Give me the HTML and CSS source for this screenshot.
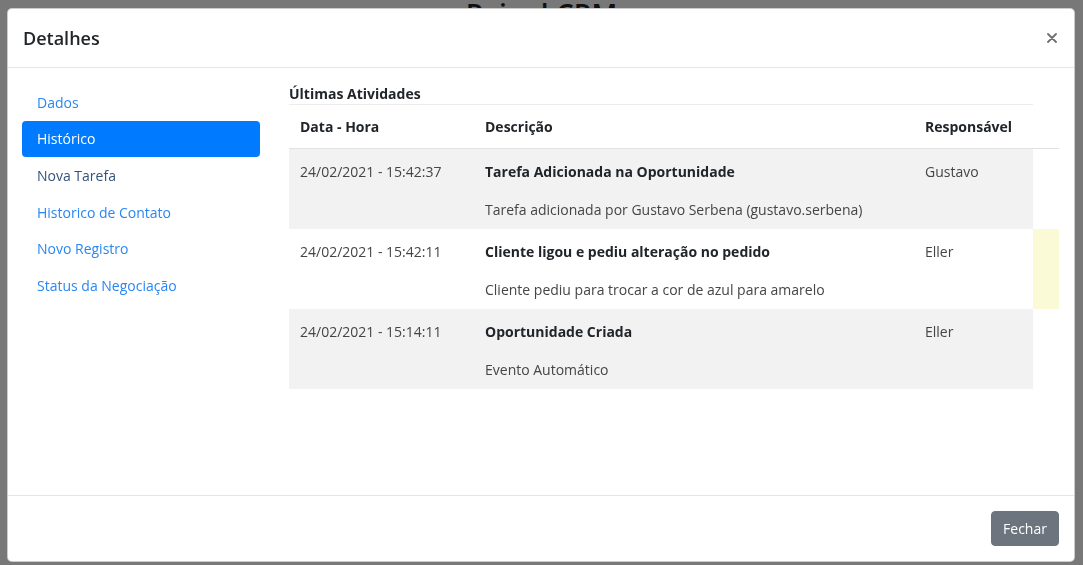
FILE: index.html
```html
<!DOCTYPE html>
<html lang="pt-BR">
<head>
    <meta charset="UTF-8">
    <meta name="viewport" content="width=device-width, initial-scale=1.0">
    <title>Painel CRM</title>
    <link rel="stylesheet" href="styles.css">
</head>
<body>
    <h1 class="page-title">Painel CRM</h1>

    <div class="backdrop"></div>

    <div class="modal">
        <div class="modal-header">
            <h5 class="modal-title">Detalhes</h5>
            <button class="close" type="button" aria-label="Fechar">
                <svg width="10" height="10" viewBox="0 0 10 10">
                    <path d="M1 1L9 9M9 1L1 9" stroke="#6f6f6f" stroke-width="1.8" stroke-linecap="round"/>
                </svg>
            </button>
        </div>

        <div class="modal-body">
            <ul class="side-nav">
                <li><a href="#">Dados</a></li>
                <li><a href="#" class="on">Histórico</a></li>
                <li><a href="#" class="hover">Nova Tarefa</a></li>
                <li><a href="#">Historico de Contato</a></li>
                <li><a href="#">Novo Registro</a></li>
                <li><a href="#">Status da Negociação</a></li>
            </ul>

            <div class="activity">
                <div class="activity-title">Últimas Atividades</div>
                <table class="activity-table">
                    <colgroup>
                        <col class="c-date">
                        <col class="c-desc">
                        <col class="c-user">
                        <col class="c-flag">
                    </colgroup>
                    <thead>
                        <tr>
                            <th>Data - Hora</th>
                            <th>Descrição</th>
                            <th>Responsável</th>
                            <th></th>
                        </tr>
                    </thead>
                    <tbody>
                        <tr class="striped">
                            <td>24/02/2021 - 15:42:37</td>
                            <td>
                                <div class="act-name">Tarefa Adicionada na Oportunidade</div>
                                <div>Tarefa adicionada por Gustavo Serbena (gustavo.serbena)</div>
                            </td>
                            <td>Gustavo</td>
                            <td class="flag"></td>
                        </tr>
                        <tr>
                            <td>24/02/2021 - 15:42:11</td>
                            <td>
                                <div class="act-name">Cliente ligou e pediu alteração no pedido</div>
                                <div>Cliente pediu para trocar a cor de azul para amarelo</div>
                            </td>
                            <td>Eller</td>
                            <td class="flag warn"></td>
                        </tr>
                        <tr class="striped">
                            <td>24/02/2021 - 15:14:11</td>
                            <td>
                                <div class="act-name">Oportunidade Criada</div>
                                <div>Evento Automático</div>
                            </td>
                            <td>Eller</td>
                            <td class="flag"></td>
                        </tr>
                    </tbody>
                </table>
            </div>
        </div>

        <div class="modal-footer">
            <button class="btn" type="button">Fechar</button>
        </div>
    </div>
</body>
</html>
```

FILE: styles.css
```css
* {
    margin: 0;
    padding: 0;
    box-sizing: border-box;
}
body {
    background: #fff;
    font-family: "Open Sans", "Noto Sans", sans-serif;
    font-size: 14px;
    line-height: 21px;
    color: #212529;
}
.page-title {
    text-align: center;
    font-size: 28px;
    font-weight: 600;
    line-height: 34px;
    margin-top: -3px;
}
.backdrop {
    position: fixed;
    top: 0;
    left: 0;
    right: 0;
    bottom: 0;
    background: rgba(0, 0, 0, .53);
}
.modal {
    position: fixed;
    left: 7px;
    top: 8px;
    width: 1068px;
    height: 554px;
    background: #fff;
    border: 1px solid rgba(0, 0, 0, .2);
    border-radius: 5px;
    display: flex;
    flex-direction: column;
}
.modal-header {
    height: 59px;
    padding: 0 17px 0 15px;
    border-bottom: 1px solid #e6e6e6;
    display: flex;
    align-items: center;
    justify-content: space-between;
}
.modal-title {
    font-size: 18px;
    font-weight: 600;
    line-height: 30px;
}
.close {
    border: 0;
    background: none;
    width: 10px;
    height: 10px;
    display: flex;
    cursor: pointer;
}
.modal-body {
    flex: 1;
    padding: 16px 15px 16px 14px;
    display: flex;
    gap: 29px;
}
.side-nav {
    list-style: none;
    width: 238px;
    flex-shrink: 0;
}
.side-nav a {
    display: block;
    padding: 7.8px 15px;
    color: #2a86f2;
    text-decoration: none;
    border-radius: 4px;
}
.side-nav a.hover {
    color: #34537a;
}
.side-nav a.on {
    background: #007bff;
    color: #fff;
}
.activity {
    width: 770px;
}
.activity-title {
    width: 744px;
    font-weight: 700;
    line-height: 20px;
    border-bottom: 1px solid #ececec;
}
.activity-table {
    width: 770px;
    border-collapse: collapse;
    table-layout: fixed;
}
.c-date { width: 185px; }
.c-desc { width: 440px; }
.c-user { width: 119px; }
.c-flag { width: 26px; }
.activity-table th {
    text-align: left;
    font-weight: 700;
    padding: 11px;
    border-bottom: 1px solid #e2e2e2;
}
.activity-table td {
    vertical-align: top;
    padding: 12px 11px 9px;
    color: #454545;
}
.activity-table .striped td {
    background: #f2f2f2;
}
.activity-table .striped td.flag {
    background: none;
}
.activity-table td.warn {
    background: #fafad6;
}
.act-name {
    font-weight: 700;
    color: #212529;
    margin-bottom: 17px;
}
.modal-footer {
    border-top: 1px solid #e6e6e6;
    padding: 15px 15px;
    display: flex;
    justify-content: flex-end;
}
.btn {
    width: 68px;
    height: 35px;
    border: 1px solid #6c757d;
    border-radius: 4px;
    background: #6c757d;
    color: #fff;
    font-family: inherit;
    font-size: 14px;
    cursor: pointer;
}
```
